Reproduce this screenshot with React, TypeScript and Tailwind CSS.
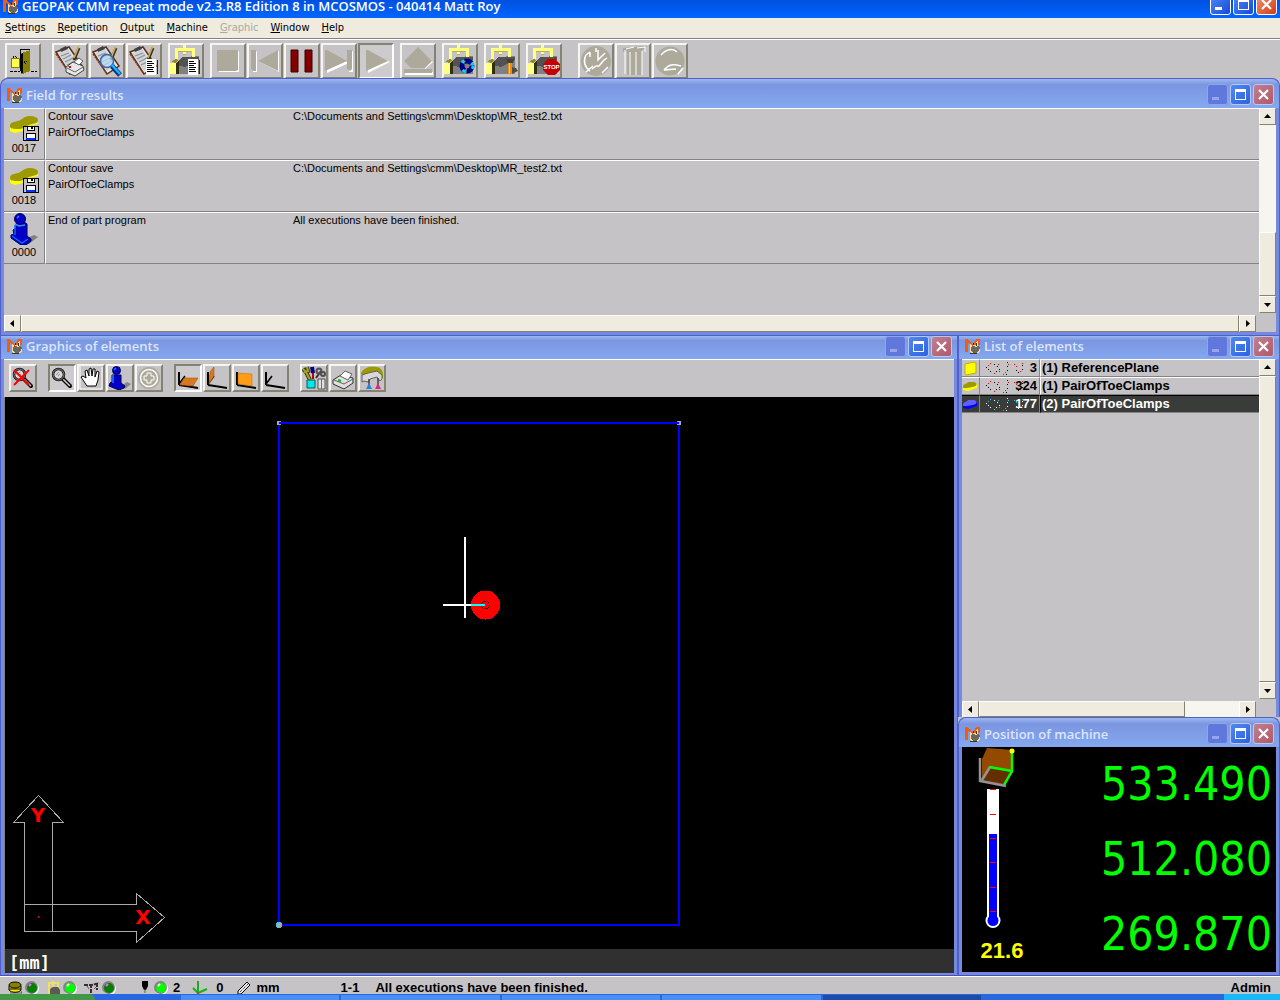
import type { ReactNode } from 'react';
import { clsx } from 'clsx';

const RESULTS = [
  { icon: 'contour', no: '0017', title: 'Contour save', name: 'PairOfToeClamps', info: 'C:\\Documents and Settings\\cmm\\Desktop\\MR_test2.txt' },
  { icon: 'contour', no: '0018', title: 'Contour save', name: 'PairOfToeClamps', info: 'C:\\Documents and Settings\\cmm\\Desktop\\MR_test2.txt' },
  { icon: 'pawn', no: '0000', title: 'End of part program', name: '', info: 'All executions have been finished.' },
];

const ELEMENTS = [
  { kind: 'plane', count: 3, label: '(1) ReferencePlane', selected: false },
  { kind: 'contour', count: 324, label: '(1) PairOfToeClamps', selected: false },
  { kind: 'contour', count: 177, label: '(2) PairOfToeClamps', selected: true },
];

const MENU = ['Settings', 'Repetition', 'Output', 'Machine', 'Graphic', 'Window', 'Help'];

/* ---------- shared icons ---------- */

function AppIcon() {
  return (
    <svg viewBox="0 0 16 16" className="size-4 shrink-0" shapeRendering="crispEdges">
      <path d="M0 1h3l3 4 2 2 3-6h4v6h-2V5l-3 4H8L3 5v9H0z" fill="#f25c12" />
      <path d="M5 6l1-1 1 3 2-2 1 2 2-5 1 1v4l2 1v4l-2 2-6 1-2-3z" fill="#f0e0a0" />
      <path d="M6 9l2-1 3 1 2-1 2 2-1 3-3 2H8l-2-3z" fill="#6c665c" />
      <path d="M8 5h1v2H8zM11 5h1v3h-1zM5 15h7v1H5z" fill="#403020" />
    </svg>
  );
}

function Pawn() {
  return (
    <svg viewBox="0 0 28 32" className="h-8 w-7">
      <path d="M15 26l9-4 4 2-9 7h-5z" fill="#808080" />
      <path d="M3 17l3-2V11l2-2h6l3 2v12l4 3v2l-5 4h-5L1 25v-3l3-1z" fill="#0000c6" stroke="#000052" />
      <path d="M5 12v10M2 23l10 7 6-4" fill="none" stroke="#1860ff" strokeWidth="1.5" />
      <circle cx="10" cy="6" r="5.5" fill="#0000c6" stroke="#000052" />
      <path d="M7 5l2-2M5 11l4 2 6-1" stroke="#3090ff" strokeWidth="1.5" fill="none" />
    </svg>
  );
}

function ContourSave() {
  return (
    <svg viewBox="0 0 30 26" className="h-[26px] w-[30px]">
      <path d="M1 10v6l5 2 8-2 6-5 9-2V5L18 9z" fill="#ffff00" />
      <path d="M1 11c0-4 4-4 8-5s6-5 11-5c6 0 9 2 9 4 0 4-4 3-9 5-4 2-6 4-11 4-5 0-8 0-8-3z" fill="#9c9a00" />
      <g shapeRendering="crispEdges">
        <path d="M14 11h15v14H14z" fill="#c6c3c6" stroke="#000" />
        <path d="M18 11h7v4h-7zM17 18h9v7h-9z" fill="#fff" stroke="#000" />
        <path d="M22 12h2v2h-2z" />
        <path d="M17 23h9v2h-9z" fill="#0030ff" />
      </g>
    </svg>
  );
}

/* clipboard shared by the three protocol buttons */
function Clipboard() {
  return (
    <>
      <path d="M2 7L15 2l13 19-12 8z" fill="#e8eaec" stroke="#5a3018" strokeWidth="1.5" />
      <path d="M4 8l10-4 11 16-9 6z" fill="#d0d3d8" />
      <path d="M7 11l8-3M9 14l8-4M11 17l8-4M13 20l8-4" stroke="#8a9098" strokeWidth="1.2" />
      <path d="M6 4l6-3 2 3-7 3z" fill="#404040" />
      <path d="M25 3l-5 12" stroke="#303030" strokeWidth="3" />
      <path d="M25 1l-5 12" stroke="#e0b040" strokeWidth="1.5" />
      <path d="M2 9l14 20" stroke="#8c3c20" strokeWidth="1.5" strokeDasharray="2 1" />
    </>
  );
}

function Sheet() {
  return (
    <g shapeRendering="crispEdges">
      <path d="M18 14h10v16H18z" fill="#fff" />
      <path d="M19 16.500h5M19 18.500h7M19 20.500h5M19 22.500h7M19 24.500h6M19 26.500h7" stroke="#000" />
      <path d="M29.500 15v14" stroke="#800000" />
    </g>
  );
}

/* measuring machine shared by the CMM buttons */
function Machine() {
  return (
    <g shapeRendering="crispEdges">
      <path d="M6 21l6-9 17-1v18H6z" fill="#808080" />
      <path d="M6 20l6-8h17v3l-14 7z" fill="#525252" />
      <path d="M0 18h6v11H0z" fill="#ffff84" />
      <path d="M6 18l3-3v14H6z" fill="#303010" />
      <path d="M1 17l5-3 2 1-2 3z" fill="#8c8c20" />
      <path d="M6 14V4h17v8M14 0v9" fill="none" stroke="#ffff84" strokeWidth="3" />
      <path d="M8 6h13M15.500 9h-3" stroke="#b8b048" />
    </g>
  );
}

function ToolSvg({ children }: { children: ReactNode }) {
  return (
    <svg viewBox="0 0 32 32" className="size-8">
      {children}
    </svg>
  );
}

const GRAY = '#adaa9c';

const MAIN_TOOLS: { label: string; pressed?: boolean; disabled?: boolean; art: ReactNode }[][] = [
  [
    {
      label: 'Exit',
      art: (
        <g shapeRendering="crispEdges">
          <path d="M13.500 4.500h9v21h-9z" fill="#c6c3c6" stroke="#000" />
          <path d="M14 8l9-3v21l-7 3h-2z" fill="#848200" />
          <path d="M14 9l2-1v20h-2z" fill="#000" />
          <path d="M4 13h8v9H4z" fill="#ffff52" stroke="#848200" />
          <path d="M6 13v-2h3v2M17 16h2v2h-2z" stroke="#000" fill="none" strokeDasharray="1 1" />
          <path d="M3 26.500h10M24 26.500h6" stroke="#000" strokeDasharray="3 1" />
        </g>
      ),
    },
  ],
  [
    {
      label: 'Print protocol',
      art: (
        <>
          <Clipboard />
          <path d="M12 22l7-5 10 4 1 4-9 6-9-4z" fill="#e8e8e8" stroke="#404040" />
          <path d="M20 17l5-4 4 3-4 4z" fill="#fff" stroke="#606060" />
          <path d="M13 23l8 4 8-5M14 21l3 1" fill="none" stroke="#606060" />
          <path d="M15 22h2" stroke="#e00000" strokeWidth="2" />
        </>
      ),
    },
    {
      label: 'Protocol preview',
      art: (
        <>
          <Clipboard />
          <circle cx="16" cy="16" r="6.500" fill="#b8dcf8" fillOpacity=".7" stroke="#3868a8" strokeWidth="1.5" />
          <path d="M21 21l8 9" stroke="#003a84" strokeWidth="5" />
          <path d="M21 20l8 9" stroke="#20b0ff" strokeWidth="2.500" />
        </>
      ),
    },
    { label: 'Protocol output', art: <><Clipboard /><Sheet /></> },
  ],
  [{ label: 'Machine protocol', art: <><Machine /><Sheet /></> }],
  [
    { label: 'Stop', disabled: true, art: <><path d="M7 6h19l1 1v20H7z" fill="#fff" /><path d="M5 5h20l1 1v19l-2 1H5z" fill={GRAY} /></> },
    {
      label: 'Previous',
      disabled: true,
      art: <><path d="M3 6h4l1 1v20H4zM30 6v21L11 17z" fill="#fff" /><path d="M2 5h5v21H4l-2-2zM29 5v21L9 16z" fill={GRAY} /></>,
    },
    { label: 'Pause', art: <path d="M5 5h7v22H5zM19 5h7v22h-7z" fill="#840000" stroke="#3a0000" /> },
    {
      label: 'Next',
      disabled: true,
      art: <><path d="M4 7l22 11L4 28zM25 6h5v21h-4z" fill="#fff" /><path d="M2 5h2l20 11L2 26zM24 5h5v19l-2 2-3-2z" fill={GRAY} /></>,
    },
    { label: 'Play', pressed: true, art: <><path d="M8 7l22 10L8 28z" fill="#fff" /><path d="M6 5h2l20 11L6 26z" fill={GRAY} /></> },
  ],
  [{ label: 'Eject', disabled: true, art: <><path d="M3 27h28v3H3zM17 4l14 13-8 7z" fill="#fff" /><path d="M16 2l14 14-7 7H9l-7-7zM2 24h28v4H2z" fill={GRAY} /></> }],
  [
    {
      label: 'Machine recycle',
      art: (
        <>
          <Machine />
          <circle cx="23" cy="21" r="5" fill="none" stroke="#000084" strokeWidth="5" strokeDasharray="8 2" />
          <circle cx="23" cy="21" r="6" fill="none" stroke="#00d8ff" strokeWidth="3" strokeDasharray="3 8" />
        </>
      ),
    },
  ],
  [
    {
      label: 'Machine probe',
      art: (
        <>
          <Machine />
          <path d="M25 29l7-3-2-3-5-1z" fill="#504c40" />
          <path d="M22 17h4v12h-4z" fill="#f08c10" />
          <path d="M23.500 18v10" stroke="#ffd060" />
          <path d="M20 14h8l-1 4h-5z" fill="#404040" />
        </>
      ),
    },
  ],
  [
    {
      label: 'Machine stop',
      art: (
        <>
          <Machine />
          <path d="M20 14h7l5 5v6l-5 5h-7l-5-5v-6z" fill="#c60000" />
          <text x="23.500" y="24" textAnchor="middle" fontSize="6" fill="#fff" className="font-['Liberation_Sans'] font-bold">STOP</text>
        </>
      ),
    },
  ],
  [
    {
      label: 'No clock',
      disabled: true,
      art: <><circle cx="16" cy="16" r="13.500" fill={GRAY} stroke={GRAY} strokeWidth="3" /><path d="M10 26a12 12 0 0 1-4-16l4-3M18 5v10l7-7M12 24l4-3h3l5-6 3-2M6 27l7-6M22 28l6-6M10 7v5M16 3v4" fill="none" stroke="#fff" strokeWidth="1.500" /></>,
    },
    {
      label: 'Columns',
      disabled: true,
      art: <><path d="M6 3l20-2 2 3-3 1v25H10V6L6 7z" fill={GRAY} /><path d="M8 5v24M13 7v23M19 7v23M25 6v24M9 4l8-2M20 3l8-1v5" fill="none" stroke="#fff" /></>,
    },
    {
      label: 'No loop',
      disabled: true,
      art: <><circle cx="16" cy="16" r="14.500" fill={GRAY} /><path d="M7 10c5-6 12-7 16-3M10 25c5-6 9-6 17-4M10 25l12-1M24 29l5-6" fill="none" stroke="#fff" strokeWidth="1.500" /></>,
    },
  ],
];

const GROUP_GAPS = ['', 'ml-[11px]', 'ml-1.5', 'ml-1.5', 'ml-1.5', 'ml-1.5', 'ml-1.5', 'ml-1.5', 'ml-4'];

const glass = (
  <>
    <path d="M12 12l8 8" stroke="#000" strokeWidth="4" strokeLinecap="round" />
    <path d="M13 13l7 7" stroke="#d0d0d0" strokeWidth="1.500" />
    <circle cx="8.500" cy="8.500" r="5.500" fill="#d8d6d4" stroke="#000" strokeWidth="2.500" />
    <circle cx="8.500" cy="8.500" r="5.500" fill="none" stroke="#b8b8b8" strokeWidth=".8" />
    <path d="M6 9l3-3M8 10l2-2" stroke="#909090" />
  </>
);
const axes = (
  <>
    <path d="M3 6v13M3 19l13 2 6 1" fill="none" stroke="#000" strokeWidth="2" />
    <path d="M3 18l6-8" stroke="#000" strokeWidth="1.500" />
  </>
);

const VIEW_TOOLS: { label: string; pressed?: boolean; disabled?: boolean; art: ReactNode }[][] = [
  [{ label: 'Reset zoom', art: <>{glass}<path d="M3 4l15 15M18 4L3 19" stroke="#ff0000" strokeWidth="2" /></> }],
  [
    { label: 'Zoom', pressed: true, art: glass },
    {
      label: 'Pan',
      art: <><path d="M1 0v23h22V1" fill="none" stroke="#fff" /><path d="M8 20l-4-6-2-3 2-1 3 2-1-7 2-1 2 6V3l2-1 1 8 1-7h2v8l2-6 2 1-1 8-2 6z" fill="#fff" stroke="#000" /></>,
    },
    {
      label: 'Element info',
      art: (
        <>
          <path d="M13 20l6-4 4 2-6 5z" fill="#848484" />
          <path d="M4 9h9v8l4 3-1 2-5 2-10-4 1-3 2-1z" fill="#0000c6" stroke="#000052" />
          <circle cx="8.500" cy="4.500" r="4" fill="#0000c6" stroke="#000052" />
          <path d="M6 4l2-2M5 9v8" stroke="#2878ff" strokeWidth="1.500" />
        </>
      ),
    },
    {
      label: 'Add',
      disabled: true,
      art: (
        <>
          <circle cx="12" cy="12" r="11" fill={GRAY} />
          <circle cx="12" cy="12" r="8.500" fill="none" stroke="#fff" strokeWidth="1.500" />
          <path d="M10 7h4v3h3v4h-3v3h-4v-3H7v-4h3z" fill={GRAY} stroke="#fff" />
        </>
      ),
    },
  ],
  [
    { label: 'XY view', pressed: true, art: <>{axes}<path d="M8 12h14l-5 8-13-1z" fill="#d87820" stroke="#a04800" strokeWidth=".5" /></> },
    { label: 'YZ view', art: <>{axes}<path d="M5 6l4-5v9l-5 8z" fill="#d87820" stroke="#a04800" strokeWidth=".5" /></> },
    { label: 'XZ view', art: <>{axes}<path d="M4 7l14 1v12L4 18z" fill="#ff9c18" stroke="#c06800" strokeWidth=".5" /></> },
    { label: '3D view', art: axes },
  ],
  [
    {
      label: 'Settings',
      art: (
        <>
          <path d="M1 3l3 3 4 8M5 1l1 4-4 1" stroke="#3c3a10" strokeWidth="4" fill="none" />
          <path d="M1 3l3 3 4 8M5 1l1 4-4 1" stroke="#a8a428" strokeWidth="2" fill="none" />
          <path d="M10 1l1 6" stroke="#000084" strokeWidth="4" />
          <path d="M11 7v6" stroke="#c00000" strokeWidth="2" />
          <path d="M14 12l5-7" stroke="#303030" strokeWidth="2" />
          <circle cx="17" cy="5" r="2.500" fill="none" stroke="#505050" strokeWidth="2" />
          <circle cx="21" cy="8" r="2" fill="none" stroke="#505050" strokeWidth="2" />
          <path d="M5 14h8v8H5z" fill="#00e8e8" stroke="#005a5a" />
          <path d="M16 13h7v10h-7z" fill="#e0e0e0" stroke="#505050" />
          <path d="M19.500 13v10" stroke="#707070" />
        </>
      ),
    },
    {
      label: 'Print',
      art: (
        <>
          <path d="M2 14l8-5 12 3v5l-9 6-11-5z" fill="#e0e0e0" stroke="#303030" />
          <path d="M9 10l5-5 7 3-4 6z" fill="#fff" stroke="#606060" />
          <path d="M3 14l10 4 9-5" fill="none" stroke="#606060" />
          <path d="M7 14l3 1" stroke="#00c000" strokeWidth="2" />
        </>
      ),
    },
    {
      label: 'Machine',
      art: (
        <>
          <path d="M1 7c3-6 10-7 15-6 5 0 8 4 7 11l-5-2-10 1-5 2z" fill="#9c9a00" />
          <path d="M2 9l6-2 9-2 5 4v4l-2 2-3-4-7 2-2 3-4-1-2 1z" fill="#d8d8d8" stroke="#606060" />
          <path d="M9 13v6M18 12v7" stroke="#404040" strokeWidth="1.500" />
          <path d="M9 17l-3 6h6z" fill="#2880e0" />
          <path d="M18 17l-3 6h6z" fill="#e02878" />
        </>
      ),
    },
  ],
];

/* ---------- window chrome ---------- */

function CaptionButton({ kind, active }: { kind: 'min' | 'max' | 'close'; active?: boolean }) {
  const dim = kind === 'min' && !active;
  const label = { min: 'Minimize', max: 'Maximize', close: 'Close' }[kind];
  return (
    <button
      aria-label={label}
      className={clsx(
        'flex size-[21px] shrink-0 items-center justify-center rounded-[3px] border',
        active ? 'border-white' : dim ? 'border-[#8ea5e8]' : 'border-[#b8c8f4]',
        kind === 'close' && (active ? 'bg-linear-to-br from-[#f09070] to-[#d03808]' : 'bg-linear-to-br from-[#c08090] to-[#b05868]'),
        kind !== 'close' && (active ? 'bg-linear-to-br from-[#5088f8] to-[#1848d8]' : dim ? 'bg-[#6078dc]' : 'bg-linear-to-br from-[#5088f0] to-[#3060e0]'),
      )}
    >
      <svg viewBox="0 0 19 19" className="size-[19px]" shapeRendering={kind === 'close' ? 'auto' : 'crispEdges'}>
        {kind === 'min' && <path d="M4 12h7v3H4z" fill={dim ? '#98a4ec' : '#fff'} />}
        {kind === 'max' && <path d="M4 4h11v11H4zM5 7v7h9V7z" fill="#fff" fillRule="evenodd" />}
        {kind === 'close' && <path d="M5 5l9 9M14 5l-9 9" stroke="#fff" strokeWidth="2.200" />}
      </svg>
    </button>
  );
}

function Pane({ title, low, className, children }: { title: string; low?: boolean; className?: string; children: ReactNode }) {
  return (
    <section
      aria-label={title}
      className={clsx(
        'flex min-w-0 flex-col border-x border-t border-[#5060c8] bg-[#7489e0] px-[3px]',
        !low && 'rounded-t-lg',
        className,
      )}
    >
      <header
        className={clsx(
          '-mx-[3px] flex shrink-0 gap-0.5 bg-linear-to-b from-[#9cb8f0] via-[#7b96e0] via-20% to-[#84a8f0] px-[5px]',
          low ? 'h-[23px] items-start' : 'h-[29px] items-center rounded-t-lg pt-0.5',
        )}
      >
        <div className="flex h-5 min-w-0 flex-1 items-center gap-[3px] pl-px">
          <AppIcon />
          <h2 className="truncate font-['Open_Sans','Noto_Sans',sans-serif] text-[13px] leading-5 font-semibold text-[#dbe5fb]">{title}</h2>
        </div>
        <CaptionButton kind="min" />
        <CaptionButton kind="max" />
        <CaptionButton kind="close" />
      </header>
      {children}
    </section>
  );
}

const ARROWS = { up: 'M4 9h7L7.500 5z', down: 'M4 6h7l-3.500 4z', left: 'M9 4v7L5 7.500z', right: 'M6 4v7l4-3.500z' };

function ScrollButton({ dir }: { dir: keyof typeof ARROWS }) {
  return (
    <button
      aria-label={`Scroll ${dir}`}
      className="flex size-[17px] shrink-0 items-center justify-center border border-t-white border-r-[#848271] border-b-[#848271] border-l-white bg-[#efebde]"
    >
      <svg viewBox="0 0 15 15" className="size-[15px]">
        <path d={ARROWS[dir]} />
      </svg>
    </button>
  );
}

function Thumb({ className }: { className?: string }) {
  return <div className={clsx('border border-t-white border-r-[#848271] border-b-[#848271] border-l-white bg-[#efebde]', className)} />;
}

function ToolButton({ small, tool }: { small?: boolean; tool: { label: string; pressed?: boolean; disabled?: boolean; art: ReactNode } }) {
  return (
    <button
      aria-label={tool.label}
      disabled={tool.disabled}
      className={clsx(
        'flex shrink-0 items-center justify-center border-2',
        small ? 'size-7' : 'size-9',
        tool.pressed
          ? 'border-t-[#848271] border-r-white border-b-white border-l-[#848271] bg-[#cecbce]'
          : 'border-t-[#f7f5f0] border-r-[#848271] border-b-[#848271] border-l-[#f7f5f0] bg-[#c6c3c6]',
      )}
    >
      {small ? <svg viewBox="0 0 24 24" className="size-6">{tool.art}</svg> : <ToolSvg>{tool.art}</ToolSvg>}
    </button>
  );
}

/* ---------- panes ---------- */

function ResultsPane() {
  return (
    <Pane title="Field for results" className="pb-[3px]">
      <div className="flex min-h-[207px] bg-[#c6c3c6]">
        <div className="min-w-0 flex-1">
          <table className="w-full table-fixed border-separate border-spacing-0 font-['Liberation_Sans',Arial,sans-serif] text-[11px] leading-4 text-black">
            <colgroup>
              <col className="w-[41px]" />
              <col className="w-[246px]" />
              <col />
            </colgroup>
            <tbody>
              {RESULTS.map((r) => (
                <tr key={r.no} className="align-top">
                  <td className="border-t border-r border-b border-t-white border-r-[#848284] border-b-[#848284] p-0">
                    <div className="flex h-[50px] flex-col items-center justify-end pb-1">
                      {r.icon === 'pawn' ? <Pawn /> : <ContourSave />}
                      <span className="text-[11px] leading-[14px]">{r.no}</span>
                    </div>
                  </td>
                  <td className="border-t border-b border-l border-t-white border-b-[#848284] border-l-white p-0 pl-0.5">
                    <div className="leading-[15px]">{r.title}</div>
                    <div>{r.name}</div>
                  </td>
                  <td className="truncate border-t border-b border-t-white border-b-[#848284] p-0 pl-0.5 leading-[15px]">{r.info}</td>
                </tr>
              ))}
            </tbody>
          </table>
        </div>
        <div className="flex w-[17px] shrink-0 flex-col bg-[#f7f5ef]">
          <ScrollButton dir="up" />
          <div className="flex flex-1 flex-col justify-end">
            <Thumb className="h-16" />
          </div>
          <ScrollButton dir="down" />
          <div className="h-0.5 bg-[#c6c3c6]" />
        </div>
      </div>
      <div className="flex bg-[#c6c3c6] pr-5">
        <ScrollButton dir="left" />
        <Thumb className="flex-1" />
        <ScrollButton dir="right" />
      </div>
    </Pane>
  );
}

function Canvas() {
  return (
    <svg
      viewBox="0 0 949 551"
      preserveAspectRatio="xMinYMin meet"
      className="min-h-0 w-full flex-1 border-l border-[#848284] bg-black"
      role="img"
      aria-label="Element graphics"
    >
      <g shapeRendering="crispEdges" fill="none">
        <rect x="274" y="26" width="400" height="502" stroke="#0000ff" strokeWidth="2" />
        <circle cx="274" cy="26" r="2.500" fill="#adaaad" />
        <circle cx="674" cy="26" r="2.500" fill="#adaaad" />
        <path d="M274 28v4M274 26h5M674 28v4M669 26h5" stroke="#0000ff" strokeWidth="2" />
        <circle cx="274" cy="528" r="3" fill="#adaaad" stroke="#00e0ff" strokeDasharray="2 1" />
        <circle cx="480.500" cy="208" r="14.500" fill="#ff0000" />
        <circle cx="480.500" cy="208" r="4" stroke="#000" strokeDasharray="3 1" />
        <path d="M460 140v81M438 208h28" stroke="#fff" strokeWidth="2" />
        <path d="M466 208h14" stroke="#00ffff" strokeWidth="2" />
        <path d="M19.500 534.500V425.500h-11L33.500 398.500l25 27h-11v109M19.500 534.500h112v11l28-25-28-24v11h-112" stroke="#adaaad" />
        <path d="M33 519v2" stroke="#ff0000" />
      </g>
      <g fill="#ff0000" fontSize="20" textAnchor="middle" className="font-['DejaVu_Sans'] font-bold">
        <text x="33" y="425">Y</text>
        <text x="138" y="527">X</text>
      </g>
    </svg>
  );
}

function GraphicsPane() {
  return (
    <Pane title="Graphics of elements" low className="flex-1 border-b border-b-[#4850b8] pb-[2px]">
      <div className="flex h-[38px] shrink-0 items-start gap-[11px] border-t border-white bg-[#c6c3c6] pt-1 pl-[5px]">
        {VIEW_TOOLS.map((group, i) => (
          <div key={i} className="flex gap-px">
            {group.map((t) => (
              <ToolButton key={t.label} tool={t} small />
            ))}
          </div>
        ))}
      </div>
      <Canvas />
      <div className="h-6 shrink-0 border-l border-[#848284] bg-[#313031] pl-1 font-['DejaVu_Sans_Mono',monospace] text-[17px] leading-7 font-bold text-white">[mm]</div>
    </Pane>
  );
}

function DotPattern({ color }: { color: string }) {
  return (
    <svg viewBox="0 0 40 15" className="h-[15px] w-10" shapeRendering="crispEdges">
      <path
        d="M1 6.500h1M3 8.500h1M5 10.500h1M9 3.500h1M12 5.500h1M14 8.500h1M11 10.500h1M22 1.500h1M22 5.500h1M22 9.500h1M21 13.500h1M31 9.500h1M33 11.500h1M37 4.500h1M37 8.500h1"
        stroke={color === '#00d0e0' ? '#fff' : '#000'}
      />
      <path d="M3 4.500h1M5 2.500h1M13 3.500h1M14 10.500h1M9 12.500h1M20 11.500h1M23 3.500h1M18 13.500h1M29 3.500h1M31 5.500h1M35 10.500h1M37 2.500h1" stroke={color} />
    </svg>
  );
}

function ElementsPane() {
  return (
    <Pane title="List of elements" low className="flex-1">
      <div className="flex flex-1 bg-[#c6c3c6]">
        <div className="min-w-0 flex-1">
          <table className="w-full table-fixed border-separate border-spacing-0 font-['Liberation_Sans',Arial,sans-serif] text-[13px] leading-4 font-bold">
            <colgroup>
              <col className="w-[18px]" />
              <col className="w-[60px]" />
              <col />
            </colgroup>
            <tbody>
              {ELEMENTS.map((el) => {
                const edge = clsx('border-t border-b border-b-[#848284] p-0', el.selected ? 'border-t-black' : 'border-t-white');
                return (
                  <tr key={el.label} className={el.selected ? 'bg-[#393c39] text-white' : 'text-black'}>
                    <td className={clsx(edge, 'border-r border-r-[#848284]')}>
                      <svg viewBox="0 0 16 16" className="size-4">
                        {el.kind === 'plane' ? (
                          <path d="M3 4l9-2 2 1v10l-10 2-1-1z" fill="#ffff00" stroke="#b8b400" />
                        ) : (
                          <>
                            <path d="M1 8v4l5 1 9-3V6z" fill={el.selected ? '#0000ff' : '#ffff00'} />
                            <path d="M1 9c0-4 3-2 5-5h6c4 1 3 5-2 5-4 1-9 2-9 0z" fill={el.selected ? '#6060ff' : '#9c9a00'} />
                          </>
                        )}
                      </svg>
                    </td>
                    <td className={clsx(edge, 'border-r border-r-[#848284]')}>
                      <div className="flex h-4 items-center justify-end pr-0.5">
                        <div className="-mr-4">
                          <DotPattern color={el.selected ? '#00d0e0' : '#ff0000'} />
                        </div>
                        <span className="w-7 text-right">{el.count}</span>
                      </div>
                    </td>
                    <td className={clsx(edge, 'truncate border-l pl-px', el.selected ? 'border-l-black' : 'border-l-white')}>{el.label}</td>
                  </tr>
                );
              })}
            </tbody>
          </table>
        </div>
        <div className="flex w-[17px] shrink-0 flex-col">
          <ScrollButton dir="up" />
          <Thumb className="flex-1" />
          <ScrollButton dir="down" />
          <div className="h-0.5" />
        </div>
      </div>
      <div className="flex h-4 overflow-hidden bg-[#c6c3c6] pr-5">
        <ScrollButton dir="left" />
        <div className="flex flex-1 bg-[#f7f5ef]">
          <Thumb className="w-[206px]" />
        </div>
        <ScrollButton dir="right" />
      </div>
    </Pane>
  );
}

function PositionPane() {
  return (
    <Pane title="Position of machine" className="border-b border-b-[#4850b8] pb-[3px]">
      <div className="flex justify-between bg-black">
        <div className="flex flex-col items-center pl-3">
          <svg viewBox="12 0 56 186" className="h-[186px] w-14">
            <path d="M25 1l26 2v22l-8 13-23-4 0-22z" fill="#944900" />
            <path d="M28 20l-8 13 23 4 8-13z" fill="#632f00" />
            <path d="M18 11v23l26 5M20 33l8-13" fill="none" stroke="#949294" strokeWidth="2.500" />
            <path d="M27 20l23 4V4M50 24l-8 14" fill="none" stroke="#00ff00" strokeWidth="2.500" />
            <circle cx="50" cy="4" r="2.500" fill="#ffff00" />
            <path d="M25 42h12v130H25z" fill="#fff" shapeRendering="crispEdges" />
            <circle cx="31" cy="173.500" r="7.500" fill="#fff" />
            <circle cx="31" cy="173.500" r="5.500" fill="#0000ff" />
            <g shapeRendering="crispEdges">
              <path d="M27 87h8v84h-8z" fill="#0000ff" />
              <path d="M28 42.500h6M28 67.500h6M28 91.500h6M28 115.500h6M28 140.500h6M28 164.500h6" stroke="#ff0000" />
            </g>
          </svg>
          <output className="font-['Liberation_Sans',sans-serif] text-[22px] leading-9 font-bold text-[#ffff00]">21.6</output>
        </div>
        <div className="flex flex-col pr-1 text-right font-['DejaVu_Sans_Condensed',sans-serif] text-[46px] leading-[75px] text-[#00ff00]">
          <output>533.490</output>
          <output>512.080</output>
          <output>269.870</output>
        </div>
      </div>
    </Pane>
  );
}

/* ---------- status bar ---------- */

function Led({ on }: { on?: boolean }) {
  return (
    <svg viewBox="0 0 14 14" className="size-3.5">
      <circle cx="7.500" cy="7.500" r="6.500" fill="#fff" />
      <circle cx="6.500" cy="6.500" r="6.500" fill="#848284" />
      <circle cx="7" cy="7" r="5" fill={on ? '#00ff00' : '#008200'} />
      <path d="M4 5l2-2" stroke={on ? '#fff' : '#ff60ff'} strokeWidth="2" />
    </svg>
  );
}

function StatusBar() {
  return (
    <footer className="flex h-[18px] shrink-0 items-center border-t border-white bg-[#c6c3c6] pt-1 pr-[9px] pl-2 font-['Liberation_Sans',Arial,sans-serif] text-[13px] leading-4 font-bold text-black">
      <div className="flex items-center gap-[7px]">
        <div className="flex items-center gap-0.5">
          <svg viewBox="0 0 15 14" className="h-3.5 w-[15px]">
            <path d="M2 12h12l-1-2" fill="none" stroke="#606060" />
            <path d="M1 5v4c2 3 10 3 12 0V5z" fill="#ffe800" stroke="#000" />
            <ellipse cx="7" cy="4" rx="6" ry="3" fill="#848200" stroke="#000" />
            <path d="M1 8h12" stroke="#000" />
          </svg>
          <Led />
        </div>
        <div className="flex items-center gap-0.5">
          <svg viewBox="0 0 15 14" className="h-3.5 w-[15px]">
            <path d="M3 13V2h9v7M7 0v6" fill="none" stroke="#f0e060" strokeWidth="2" />
            <path d="M4 8l3-2h5l2 3v4H4z" fill="#5c5a54" />
          </svg>
          <Led on />
        </div>
        <div className="flex items-center gap-0.5">
          <svg viewBox="0 0 16 14" className="h-3.5 w-4">
            <path d="M0 4h8l7-2M7 3v9M13 2v7" stroke="#303030" strokeWidth="2" strokeDasharray="4 1" fill="none" />
            <path d="M3 5l2 3M10 8l2-2" stroke="#a04040" />
          </svg>
          <Led />
        </div>
      </div>
      <div className="ml-6 flex items-center gap-1">
        <svg viewBox="0 0 10 14" className="h-3.5 w-2.5">
          <path d="M2 0h6v5l-2 4H4L2 5z" />
          <path d="M5 8v4" stroke="#606060" />
        </svg>
        <Led on />
        <span className="pl-px">2</span>
      </div>
      <div className="ml-3 flex items-center gap-2">
        <svg viewBox="0 0 16 14" className="h-3.5 w-4">
          <path d="M6 12V0M6 12L1 7M6 12l9-4" fill="none" stroke="#18b018" strokeWidth="2" />
          <path d="M5 11h2v3H5z" fill="#d04020" />
        </svg>
        <span>0</span>
      </div>
      <div className="ml-3.5 flex items-center gap-1">
        <svg viewBox="0 0 14 14" className="size-3.5">
          <path d="M1 10l9-9 3 3-9 9H1z" fill="#e8e8e8" stroke="#000" />
          <path d="M3 11l8-8" stroke="#000" strokeDasharray="1 1" />
        </svg>
        <span className="pl-px">mm</span>
      </div>
      <span className="ml-[61px]">1-1</span>
      <span className="ml-4 flex-1 truncate">All executions have been finished.</span>
      <span>Admin</span>
    </footer>
  );
}

export default function App() {
  return (
    <div className="flex min-h-screen flex-col bg-[#c6c3c6]">
      <header className="flex h-[18px] shrink-0 items-end justify-between gap-2 bg-linear-to-b from-[#0050e0] to-[#0066ff] px-[3px] pb-[3px]">
        <div className="flex h-[18px] items-center gap-[3px]">
          <AppIcon />
          <h1 className="font-['Open_Sans','Noto_Sans',sans-serif] text-[13px] leading-[18px] font-semibold whitespace-nowrap text-white">
            GEOPAK CMM repeat mode v2.3.R8 Edition 8 in MCOSMOS - 040414 Matt Roy
          </h1>
        </div>
        <div className="flex gap-0.5">
          <CaptionButton kind="min" active />
          <CaptionButton kind="max" active />
          <CaptionButton kind="close" active />
        </div>
      </header>

      <nav className="flex h-[21px] shrink-0 items-center gap-3 border-b border-[#848284] bg-[#efebde] px-[5px] font-['DejaVu_Sans_Condensed','Noto_Sans',sans-serif] text-[11px] text-black">
        {MENU.map((item) => (
          <button key={item} disabled={item === 'Graphic'} className="disabled:text-[#adaa9c]">
            <span className="underline">{item[0]}</span>
            {item.slice(1)}
          </button>
        ))}
      </nav>

      <div className="flex h-[39px] shrink-0 overflow-hidden border-t border-white pt-[3px] pl-[5px]">
        {MAIN_TOOLS.map((group, i) => (
          <div key={i} className={clsx('flex gap-px', GROUP_GAPS[i])}>
            {group.map((t) => (
              <ToolButton key={t.label} tool={t} />
            ))}
          </div>
        ))}
      </div>

      <ResultsPane />
      <div className="flex flex-1">
        <GraphicsPane />
        <div className="flex w-[322px] shrink-0 flex-col">
          <ElementsPane />
          <PositionPane />
        </div>
      </div>

      <StatusBar />
      <div className="flex h-1.5 shrink-0 bg-[#2868e0]">
        <div className="w-[95px] rounded-tr-lg bg-[#409848]" />
        <div className="ml-[86px] grid flex-1 grid-cols-5 gap-0.5 border-t border-[#2868e0]">
          <div className="bg-[#4890f8]" />
          <div className="bg-[#4890f8]" />
          <div className="bg-[#4890f8]" />
          <div className="bg-[#4890f8]" />
          <div className="bg-[#1c4ca8]" />
        </div>
        <div className="w-[243px]" />
        <div className="w-14 bg-[#18b8f8]" />
      </div>
    </div>
  );
}
